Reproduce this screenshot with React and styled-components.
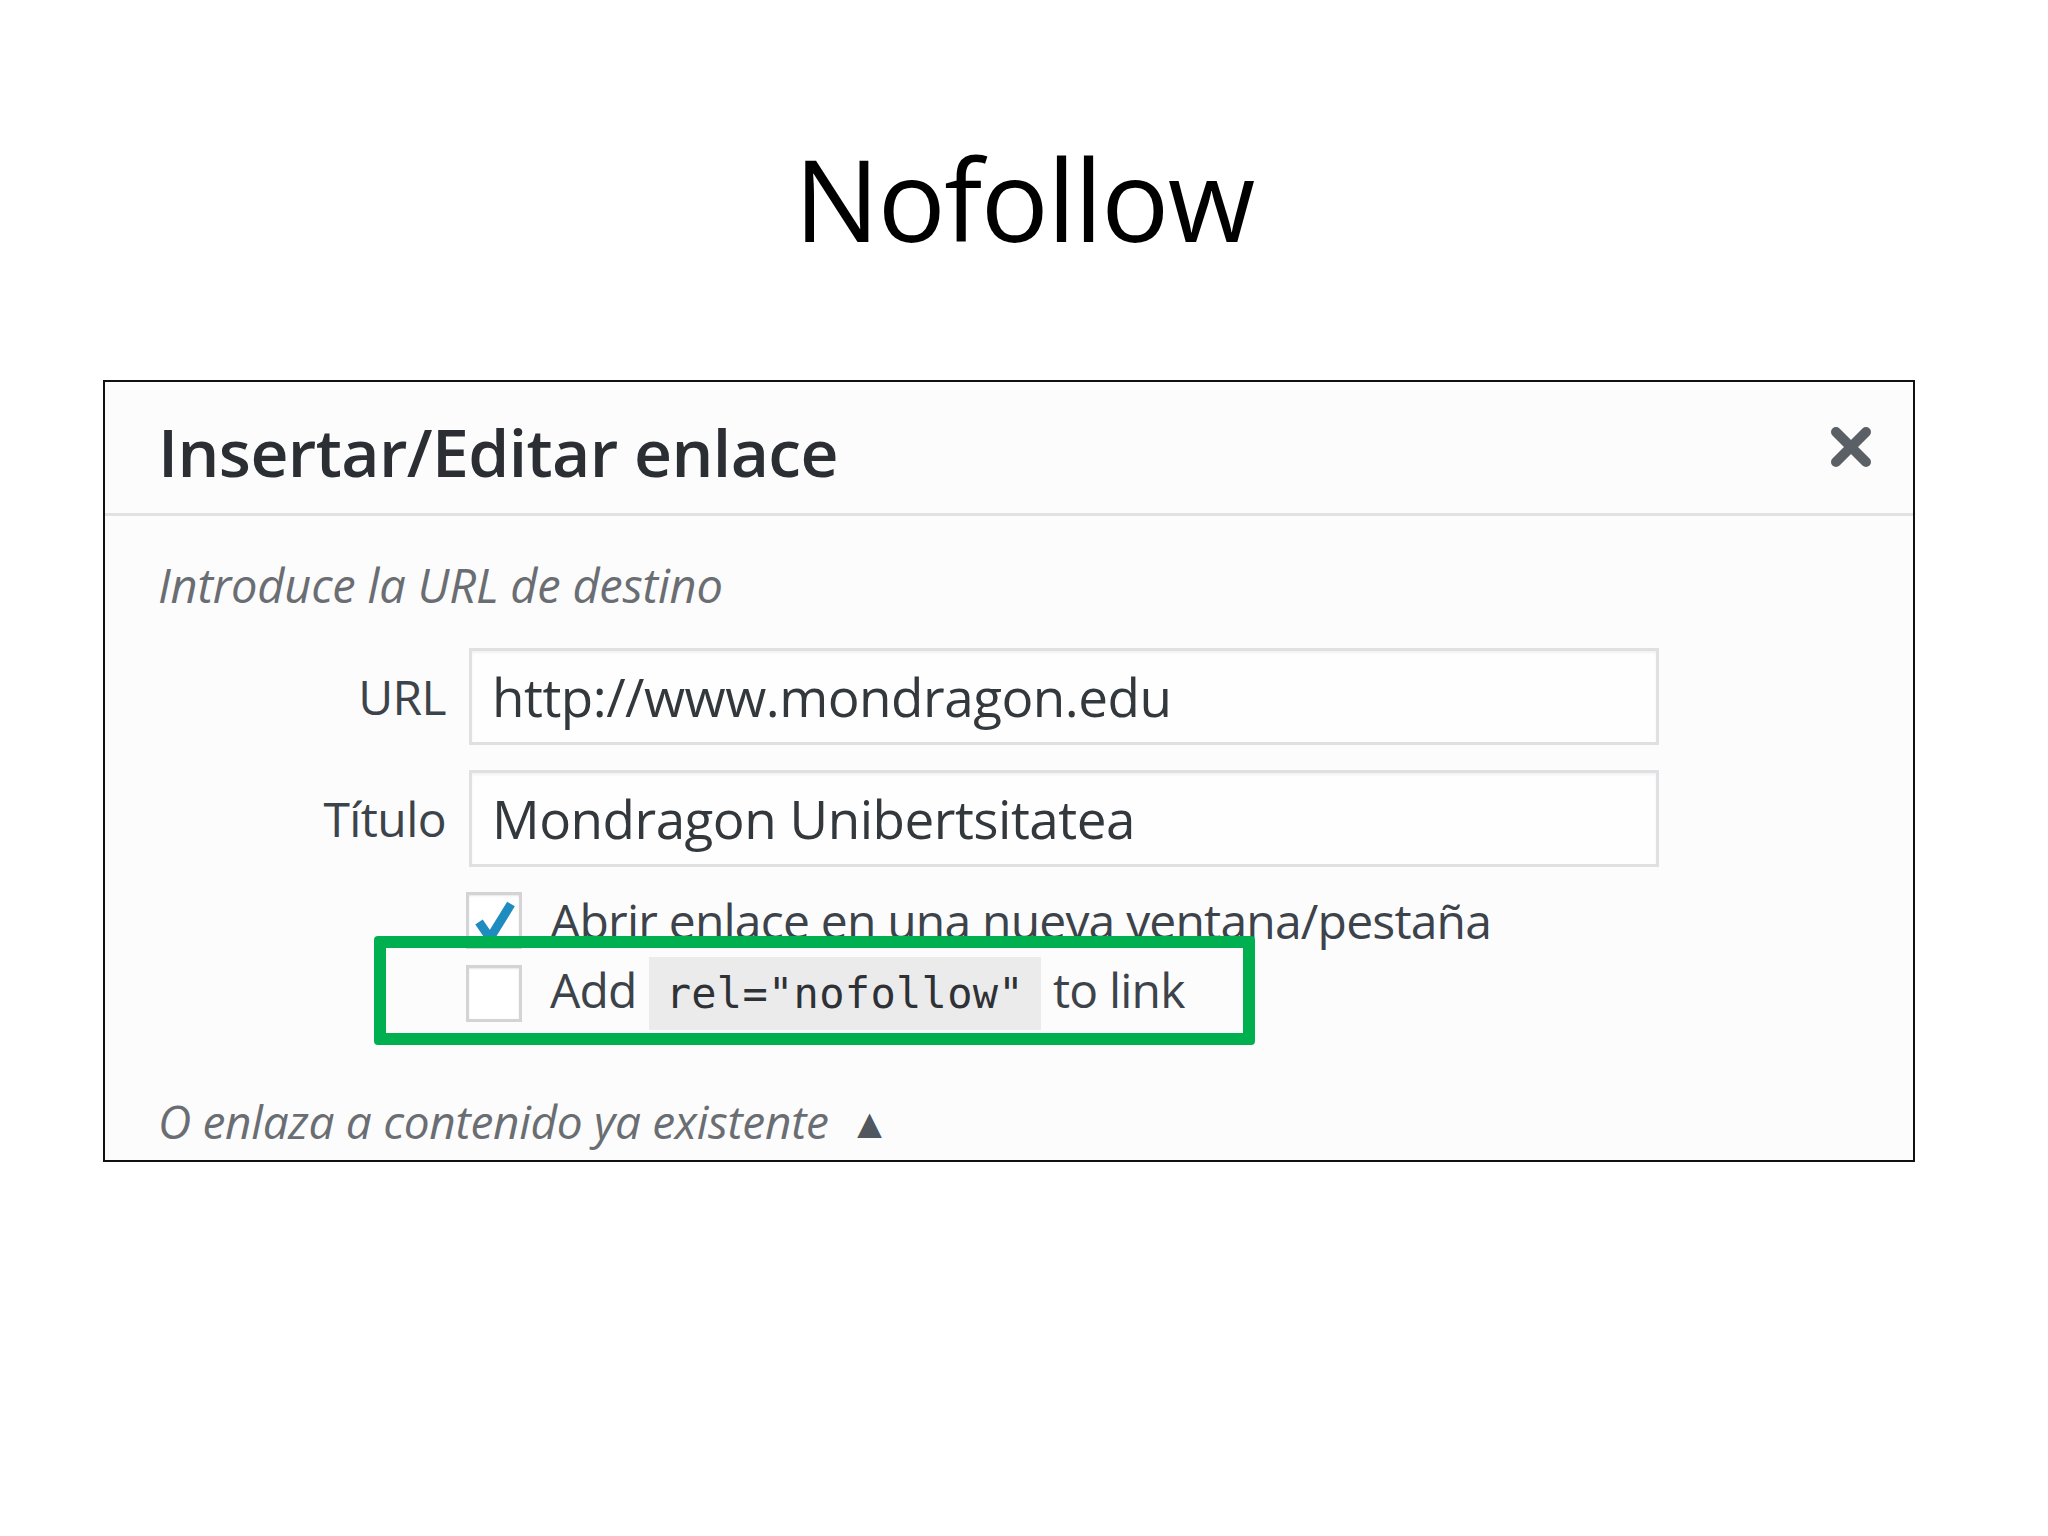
import React from 'react'
import styled, { createGlobalStyle } from 'styled-components'

const GlobalStyle = createGlobalStyle`
  body {
    margin: 0;
    background: #ffffff;
    font-family: "Open Sans", "Noto Sans", sans-serif;
  }
`

const Page = styled.div`
  width: 2048px;
  height: 1536px;
  display: flex;
  flex-direction: column;
  overflow: hidden;
`

const SlideTitle = styled.h1`
  margin: 128px 0 0;
  align-self: center;
  font-family: "Open Sans", sans-serif;
  font-weight: 400;
  font-size: 113px;
  line-height: 140px;
  color: #000;
  letter-spacing: -1.5px;
`

const Dialog = styled.div`
  box-sizing: border-box;
  margin: 112px 0 0 103px;
  width: 1812px;
  height: 782px;
  border: 2px solid #111;
  background: #fcfcfc;
  display: flex;
  flex-direction: column;
`

const Header = styled.div`
  height: 134px;
  box-sizing: border-box;
  border-bottom: 3px solid #e2e2e4;
  display: flex;
  align-items: center;
  justify-content: space-between;
  padding: 6px 40px 0 53px;
`

const Heading = styled.h2`
  margin: 0;
  font-family: "Open Sans", sans-serif;
  font-weight: 600;
  font-size: 66px;
  color: #2b2f34;
  letter-spacing: -0.6px;
`

const CloseIcon = styled.svg`
  width: 44px;
  height: 44px;
  margin-top: -8px;
`

const Body = styled.div`
  padding: 39px 0 0 53px;
  display: flex;
  flex-direction: column;
`

const Note = styled.p`
  margin: 0;
  font-style: italic;
  font-size: 47px;
  line-height: 60px;
  color: #6a6e73;
  letter-spacing: -0.2px;
`

const Fields = styled.div`
  display: grid;
  grid-template-columns: 288px 1190px;
  column-gap: 23px;
  row-gap: 25px;
  margin-top: 33px;
  align-items: center;
`

const Label = styled.label`
  text-align: right;
  font-size: 48px;
  color: #3c434a;
  letter-spacing: -0.6px;
`

const Input = styled.div`
  box-sizing: border-box;
  height: 97px;
  border: 3px solid #e0e0e2;
  box-shadow: inset 0 2px 3px rgba(0, 0, 0, 0.05);
  background: #fefefe;
  display: flex;
  align-items: center;
  padding-left: 20px;
  font-size: 53px;
  color: #33383d;
  letter-spacing: -0.5px;
`

const Options = styled.div`
  grid-column: 2;
  display: flex;
  flex-direction: column;
  gap: 16px;
  margin: 0 0 0 -3px;
`

const Option = styled.div`
  position: relative;
  display: flex;
  align-items: center;
  gap: 28px;
  height: 57px;
  font-size: 48px;
  color: #3c434a;
  letter-spacing: -0.8px;
  white-space: nowrap;
`

const Box = styled.span`
  box-sizing: border-box;
  flex: none;
  width: 56px;
  height: 57px;
  border: 3px solid #d4d4d6;
  background: #fff;
  box-shadow: inset 0 1px 2px rgba(0, 0, 0, 0.1);
  display: flex;
  align-items: center;
  justify-content: center;
  overflow: visible;
`

const Code = styled.code`
  display: inline-block;
  font-family: "DejaVu Sans Mono", "Liberation Mono", monospace;
  font-size: 42px;
  line-height: 73px;
  padding: 0 17px;
  margin: 0 12px;
  background: #ebebeb;
  color: #2e3236;
  letter-spacing: 0.3px;
`

const Highlight = styled.div`
  position: absolute;
  left: -92px;
  top: -29px;
  width: 881px;
  height: 109px;
  box-sizing: border-box;
  border: 12px solid #00b050;
  border-radius: 4px;
  pointer-events: none;
`

const Existing = styled.p`
  margin: 68px 0 0;
  font-style: italic;
  font-size: 46px;
  color: #6a6e73;
  letter-spacing: -0.3px;
  display: flex;
  align-items: center;
  gap: 20px;
`

const Arrow = styled.span`
  font-style: normal;
  font-size: 42px;
  color: #50575e;
`

export default function App() {
  return (
    <Page>
      <GlobalStyle />
      <SlideTitle>Nofollow</SlideTitle>
      <Dialog>
        <Header>
          <Heading>Insertar/Editar enlace</Heading>
          <CloseIcon viewBox="0 0 44 44">
            <path d="M7 7 L37 37 M37 7 L7 37" stroke="#5b6066" strokeWidth="10" strokeLinecap="round" />
          </CloseIcon>
        </Header>
        <Body>
          <Note>Introduce la URL de destino</Note>
          <Fields>
            <Label>URL</Label>
            <Input>http://www.mondragon.edu</Input>
            <Label>Título</Label>
            <Input>Mondragon Unibertsitatea</Input>
            <Options>
              <Option>
                <Box>
                  <svg width="56" height="57" viewBox="0 0 56 57" style={{ overflow: 'visible' }}>
                    <path d="M13 30 L24 46 L45 12" fill="none" stroke="#1e8cbe" strokeWidth="9" strokeLinejoin="miter" />
                  </svg>
                </Box>
                Abrir enlace en una nueva ventana/pestaña
              </Option>
              <Option>
                <Box />
                <span>Add<Code>rel="nofollow"</Code>to link</span>
                <Highlight />
              </Option>
            </Options>
          </Fields>
          <Existing>
            O enlaza a contenido ya existente <Arrow>▲</Arrow>
          </Existing>
        </Body>
      </Dialog>
    </Page>
  )
}
